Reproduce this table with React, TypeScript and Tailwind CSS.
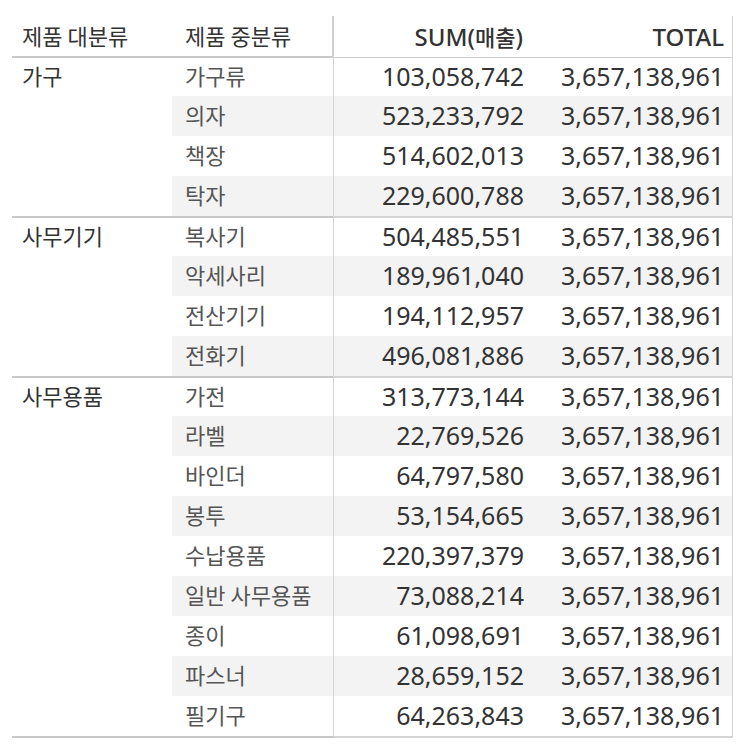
import React from 'react';

type Group = {
  name: string;
  rows: [string, string][];
};

const TOTAL = '3,657,138,961';

const groups: Group[] = [
  {
    name: '가구',
    rows: [
      ['가구류', '103,058,742'],
      ['의자', '523,233,792'],
      ['책장', '514,602,013'],
      ['탁자', '229,600,788'],
    ],
  },
  {
    name: '사무기기',
    rows: [
      ['복사기', '504,485,551'],
      ['악세사리', '189,961,040'],
      ['전산기기', '194,112,957'],
      ['전화기', '496,081,886'],
    ],
  },
  {
    name: '사무용품',
    rows: [
      ['가전', '313,773,144'],
      ['라벨', '22,769,526'],
      ['바인더', '64,797,580'],
      ['봉투', '53,154,665'],
      ['수납용품', '220,397,379'],
      ['일반 사무용품', '73,088,214'],
      ['종이', '61,098,691'],
      ['파스너', '28,659,152'],
      ['필기구', '64,263,843'],
    ],
  },
];

const ko = "font-['Noto_Sans_CJK_KR',sans-serif] text-[22px]";
const num = "font-['Noto_Sans','Noto_Sans_CJK_KR',sans-serif] text-[25px] text-[#333]";

const rowHeight = (i: number) => (i === 0 ? 'h-[38px]' : 'h-10');
const shade = (i: number) => (i % 2 === 1 ? 'bg-[#f3f3f3]' : '');

const GroupBlock = ({ group }: { group: Group }) => (
  <div className="flex">
    {/* left pane: category + sub category */}
    <div className="flex w-[321px] border-b-2 border-[#c8c8c8]">
      <div className={`w-[160px] pl-[10px] leading-[34px] text-[#333] ${ko}`}>{group.name}</div>
      <div className="flex-1">
        {group.rows.map(([sub], i) => (
          <div key={sub} className={`flex items-center pb-[3px] pl-[13px] text-[#555] ${ko} ${rowHeight(i)} ${shade(i)}`}>
            {sub}
          </div>
        ))}
      </div>
    </div>
    {/* right pane: numbers */}
    <div className="w-[400px] border-l border-r border-b-2 border-[#d4d4d4]">
      {group.rows.map(([sub, value], i) => (
        <div key={sub} className={`flex items-center ${num} ${rowHeight(i)} ${shade(i)}`}>
          <div className="w-[200px] pr-[10px] text-right">{value}</div>
          <div className="flex-1 pr-[8px] text-right">{TOTAL}</div>
        </div>
      ))}
    </div>
  </div>
);

export default function App() {
  return (
    <div className="min-h-screen bg-white pl-3 pt-4">
      <div className="w-[721px]">
        {/* header */}
        <div className="flex">
          <div className={`flex h-[42px] w-[320px] items-center pb-[2px] border-b-2 border-[#c8c8c8] text-[#333] ${ko}`}>
            <div className="w-[160px] pl-[10px]">제품 대분류</div>
            <div className="pl-[13px]">제품 중분류</div>
          </div>
          <div className="flex h-[42px] w-[401px] items-center border-l-2 border-r border-b border-[#d0d0d0] font-['Noto_Sans',sans-serif] text-[24px] font-medium text-[#333]">
            <div className="w-[199px] pr-[10px] text-right">
              SUM(<span className={ko}>매출</span>)
            </div>
            <div className="flex-1 pr-[8px] text-right">TOTAL</div>
          </div>
        </div>
        {groups.map((g) => (
          <GroupBlock key={g.name} group={g} />
        ))}
      </div>
    </div>
  );
}
